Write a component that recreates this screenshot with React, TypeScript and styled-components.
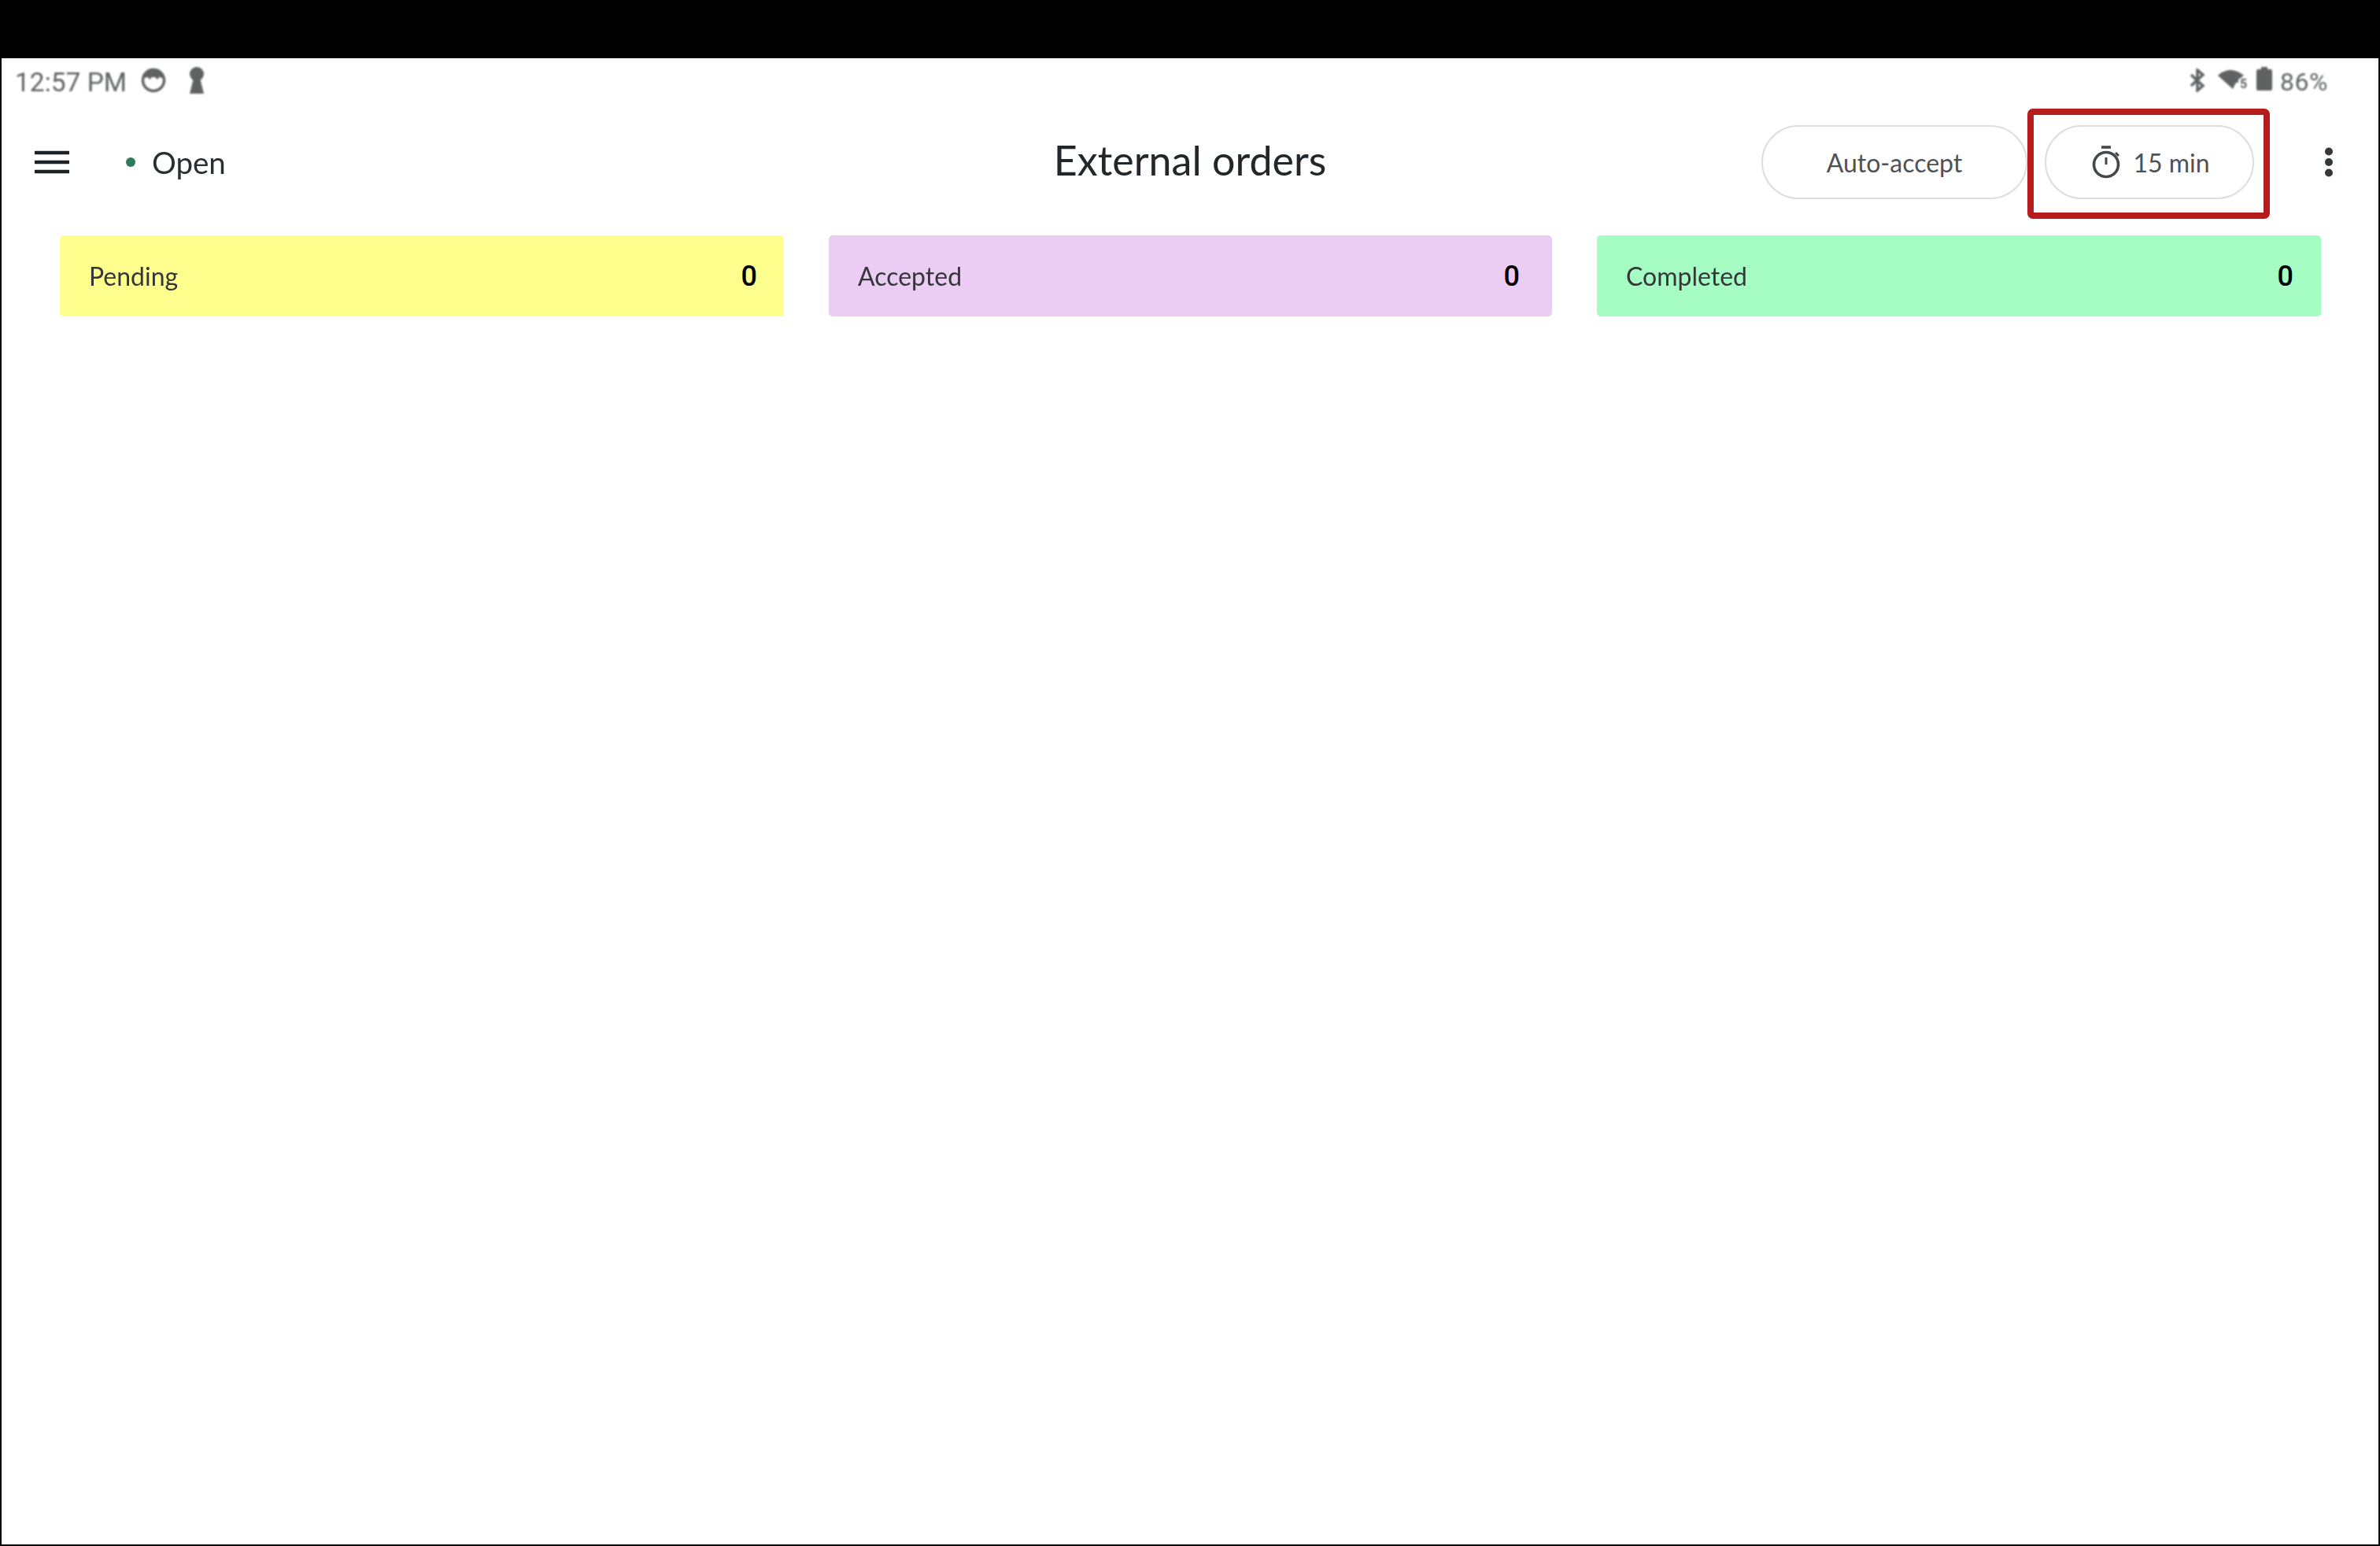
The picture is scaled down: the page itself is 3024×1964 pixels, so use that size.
import React from "react";
import styled, { createGlobalStyle } from "styled-components";

const Global = createGlobalStyle`
  html, body { margin: 0; padding: 0; background: #000; }
  #root { width: 3024px; height: 1964px; }
`;

const Frame = styled.div`
  width: 3024px;
  height: 1964px;
  box-sizing: border-box;
  background: #000;
  padding: 74px 2px 2px 2px;
  display: flex;
`;

const Screen = styled.main`
  flex: 1;
  background: #fff;
  display: flex;
  flex-direction: column;
  font-family: Lato, "Noto Sans", sans-serif;
  color: #22272b;
`;

const StatusBar = styled.div`
  height: 56px;
  display: flex;
  align-items: center;
  justify-content: space-between;
  padding: 0 64px 0 17px;
  color: #5f6162;
  font-family: Roboto, sans-serif;
  filter: blur(0.8px);
`;

const StatusGroup = styled.div<{ $gap: number }>`
  display: flex;
  align-items: center;
  gap: ${(p) => p.$gap}px;
`;

const Clock = styled.span`
  font-size: 33.5px;
  padding-top: 4px;
`;

const KeyholeSlot = styled.span`
  display: flex;
  margin-left: 11px;
`;

const BatterySlot = styled.span`
  display: flex;
  margin-bottom: 5px;
`;

const BatteryText = styled.span`
  font-size: 32px;
  padding-top: 4px;
  letter-spacing: 0.5px;
`;

const Header = styled.header`
  height: 152px;
  display: grid;
  grid-template-columns: 1fr auto 1fr;
  align-items: center;
  padding: 0 42px;
`;

const HeaderLeft = styled.div`
  display: flex;
  align-items: center;
`;

const MenuButton = styled.div`
  display: flex;
  margin-right: 72px;
`;

const StatusDot = styled.span`
  width: 12px;
  height: 12px;
  border-radius: 50%;
  background: #2d7a5a;
  margin-right: 21px;
`;

const OpenLabel = styled.span`
  font-size: 38.5px;
  color: #2a2f33;
  filter: blur(0.4px);
`;

const Title = styled.h1`
  margin: 0 0 6px;
  font-size: 52px;
  font-weight: 400;
  color: #22272b;
  filter: blur(0.4px);
`;

const HeaderRight = styled.div`
  display: flex;
  align-items: center;
  justify-content: flex-end;
  padding-right: 15px;
`;

const Pills = styled.div`
  display: flex;
  gap: 22px;
`;

const Pill = styled.div<{ $width: number }>`
  position: relative;
  width: ${(p) => p.$width}px;
  height: 94px;
  box-sizing: border-box;
  border: 2px solid #dcdde3;
  border-radius: 47px;
  display: flex;
  align-items: center;
  justify-content: center;
  gap: 16px;
  font-size: 32px;
  color: #4d5256;
`;

const Spot = styled.div`
  position: absolute;
  inset: -23px -22px -27px -24px;
  border: 8px solid #b71c1c;
  border-radius: 7px;
  pointer-events: none;
`;

const Kebab = styled.div`
  display: flex;
  margin-left: 89px;
`;

const Columns = styled.section`
  display: grid;
  grid-template-columns: 920px 919px 1fr;
  gap: 57px;
  padding: 17px 73px 0 74px;
`;

const Column = styled.div<{ $bg: string; $endGap: number }>`
  height: 103px;
  border-radius: 5px;
  background: ${(p) => p.$bg};
  display: flex;
  align-items: center;
  justify-content: space-between;
  padding: 0 ${(p) => p.$endGap}px 0 37px;
`;

const ColumnLabel = styled.span`
  font-size: 32px;
  color: #34363a;
  filter: blur(0.3px);
`;

const ColumnCount = styled.span`
  font-family: Roboto, sans-serif;
  font-size: 36px;
  font-weight: 500;
  color: #000;
`;

const WifiBadge = styled.span`
  display: flex;
  position: relative;
  margin: 0 5px 0 6px;
`;

const WifiFive = styled.span`
  position: absolute;
  right: -3px;
  bottom: 0;
  font-size: 16px;
  line-height: 16px;
  font-weight: 700;
`;

const SmileIcon = () => (
  <svg width="32" height="32" viewBox="0 0 32 32">
    <circle cx="16" cy="16" r="13.5" fill="none" stroke="#5f6162" strokeWidth="3.5" />
    <path d="M4 13C5 6 10 3 16 3s11 3 12 10l-5-1-2 3-3-3h-4l-3 3-2-3z" fill="#5f6162" />
  </svg>
);

const KeyholeIcon = () => (
  <svg width="20" height="34" viewBox="0 0 20 34">
    <circle cx="10" cy="9" r="9" fill="#5f6162" />
    <path d="M6 14h8l5 20H1z" fill="#5f6162" />
  </svg>
);

const BluetoothIcon = () => (
  <svg width="20" height="30" viewBox="0 0 20 30">
    <path d="M2 8l15 14-7 6V2l7 6L2 22" fill="none" stroke="#5f6162" strokeWidth="3.4" />
  </svg>
);

const WifiIcon = () => (
  <WifiBadge>
    <svg width="34" height="26" viewBox="0 0 34 26">
      <path d="M0 7C5 2 11 0 16 0s11 2 17 7l-7 5v4h-3l-4 8z" fill="#5f6162" />
    </svg>
    <WifiFive>5</WifiFive>
  </WifiBadge>
);

const BatteryIcon = () => (
  <svg width="20" height="30" viewBox="0 0 20 30">
    <path d="M6 0h8v3h4a2 2 0 0 1 2 2v23a2 2 0 0 1-2 2H2a2 2 0 0 1-2-2V5a2 2 0 0 1 2-2h4z" fill="#5f6162" />
  </svg>
);

const MenuIcon = () => (
  <svg width="44" height="32" viewBox="0 0 44 32">
    <path d="M1 4h42M1 16h42M1 28h42" stroke="#1d2226" strokeWidth="4.5" strokeLinecap="round" />
  </svg>
);

const TimerIcon = () => (
  <svg width="40" height="42" viewBox="-4 0 40 42">
    <circle cx="18" cy="24" r="15.5" fill="none" stroke="#44494d" strokeWidth="3.6" />
    <path d="M12 2h12" stroke="#44494d" strokeWidth="3.6" />
    <path d="M18 15v9" stroke="#44494d" strokeWidth="3" />
    <path d="M30 9l4 4" stroke="#44494d" strokeWidth="3" />
  </svg>
);

const MoreIcon = () => (
  <svg width="12" height="38" viewBox="0 0 12 38">
    <circle cx="6" cy="5.5" r="5" fill="#33383c" />
    <circle cx="6" cy="19" r="5" fill="#33383c" />
    <circle cx="6" cy="32.5" r="5" fill="#33383c" />
  </svg>
);

const columns = [
  { label: "Pending", bg: "#ffff8d", endGap: 34 },
  { label: "Accepted", bg: "#ebcdf4", endGap: 41 },
  { label: "Completed", bg: "#a5fdc3", endGap: 35 },
];

export default function App() {
  return (
    <>
      <Global />
      <Frame>
        <Screen>
          <StatusBar>
            <StatusGroup $gap={18}>
              <Clock>12:57 PM</Clock>
              <SmileIcon />
              <KeyholeSlot>
                <KeyholeIcon />
              </KeyholeSlot>
            </StatusGroup>
            <StatusGroup $gap={10}>
              <BluetoothIcon />
              <WifiIcon />
              <BatterySlot>
                <BatteryIcon />
              </BatterySlot>
              <BatteryText>86%</BatteryText>
            </StatusGroup>
          </StatusBar>
          <Header>
            <HeaderLeft>
              <MenuButton>
                <MenuIcon />
              </MenuButton>
              <StatusDot />
              <OpenLabel>Open</OpenLabel>
            </HeaderLeft>
            <Title>External orders</Title>
            <HeaderRight>
              <Pills>
                <Pill $width={338}>Auto-accept</Pill>
                <Pill $width={266}>
                  <TimerIcon />
                  15 min
                  <Spot />
                </Pill>
              </Pills>
              <Kebab>
                <MoreIcon />
              </Kebab>
            </HeaderRight>
          </Header>
          <Columns>
            {columns.map((c) => (
              <Column key={c.label} $bg={c.bg} $endGap={c.endGap}>
                <ColumnLabel>{c.label}</ColumnLabel>
                <ColumnCount>0</ColumnCount>
              </Column>
            ))}
          </Columns>
        </Screen>
      </Frame>
    </>
  );
}
